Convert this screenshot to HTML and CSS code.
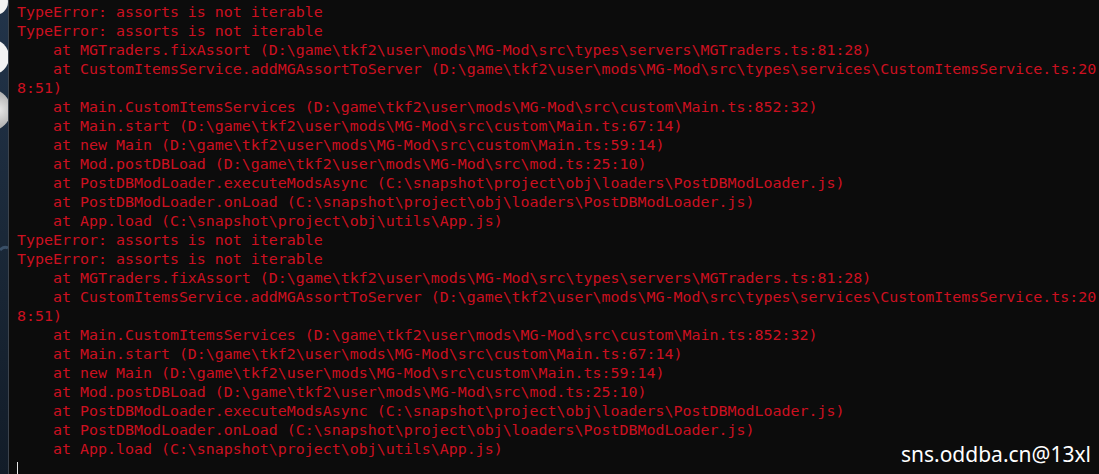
FILE: index.html
```html
<!DOCTYPE html>
<html>
<head>
<meta charset="utf-8">
<link rel="stylesheet" href="styles.css">
</head>
<body>
<div class="screen">
  <div class="wallpaper">
    <svg width="8" height="474" viewBox="0 0 8 474">
      <defs>
        <linearGradient id="bg" x1="0" y1="0" x2="0" y2="1">
          <stop offset="0" stop-color="#22344a"/>
          <stop offset="0.5" stop-color="#1a2838"/>
          <stop offset="1" stop-color="#121c28"/>
        </linearGradient>
        <radialGradient id="grey" cx="0.7" cy="0.5" r="0.6">
          <stop offset="0" stop-color="#e8e8e8"/>
          <stop offset="1" stop-color="#9a9a9a"/>
        </radialGradient>
      </defs>
      <rect width="8" height="474" fill="url(#bg)"/>
      <path d="M0 250 Q4 246 8 248" stroke="#3a5068" stroke-width="3" fill="none"/>
      <circle cx="-5" cy="2" r="13" fill="#f2f2f2"/>
      <circle cx="-9" cy="57" r="18" fill="#f2f2f2"/>
      <circle cx="-10" cy="110" r="21" fill="url(#grey)"/>
    </svg>
  </div>
  <div class="divider"></div>
  <div class="terminal">
<pre class="output">TypeError: assorts is not iterable
TypeError: assorts is not iterable
    at MGTraders.fixAssort (D:\game\tkf2\user\mods\MG-Mod\src\types\servers\MGTraders.ts:81:28)
    at CustomItemsService.addMGAssortToServer (D:\game\tkf2\user\mods\MG-Mod\src\types\services\CustomItemsService.ts:20
8:51)
    at Main.CustomItemsServices (D:\game\tkf2\user\mods\MG-Mod\src\custom\Main.ts:852:32)
    at Main.start (D:\game\tkf2\user\mods\MG-Mod\src\custom\Main.ts:67:14)
    at new Main (D:\game\tkf2\user\mods\MG-Mod\src\custom\Main.ts:59:14)
    at Mod.postDBLoad (D:\game\tkf2\user\mods\MG-Mod\src\mod.ts:25:10)
    at PostDBModLoader.executeModsAsync (C:\snapshot\project\obj\loaders\PostDBModLoader.js)
    at PostDBModLoader.onLoad (C:\snapshot\project\obj\loaders\PostDBModLoader.js)
    at App.load (C:\snapshot\project\obj\utils\App.js)
TypeError: assorts is not iterable
TypeError: assorts is not iterable
    at MGTraders.fixAssort (D:\game\tkf2\user\mods\MG-Mod\src\types\servers\MGTraders.ts:81:28)
    at CustomItemsService.addMGAssortToServer (D:\game\tkf2\user\mods\MG-Mod\src\types\services\CustomItemsService.ts:20
8:51)
    at Main.CustomItemsServices (D:\game\tkf2\user\mods\MG-Mod\src\custom\Main.ts:852:32)
    at Main.start (D:\game\tkf2\user\mods\MG-Mod\src\custom\Main.ts:67:14)
    at new Main (D:\game\tkf2\user\mods\MG-Mod\src\custom\Main.ts:59:14)
    at Mod.postDBLoad (D:\game\tkf2\user\mods\MG-Mod\src\mod.ts:25:10)
    at PostDBModLoader.executeModsAsync (C:\snapshot\project\obj\loaders\PostDBModLoader.js)
    at PostDBModLoader.onLoad (C:\snapshot\project\obj\loaders\PostDBModLoader.js)
    at App.load (C:\snapshot\project\obj\utils\App.js)</pre>
    <div class="prompt"><span class="cursor"></span></div>
  </div>
  <div class="watermark">sns.oddba.cn@13xl</div>
</div>
</body>
</html>
```
FILE: styles.css
```css
html, body {
  margin: 0;
  padding: 0;
  background: #0c0c0c;
  overflow: hidden;
}
.screen {
  position: relative;
  display: flex;
  width: 1099px;
  height: 474px;
  overflow: hidden;
}
.wallpaper {
  width: 8px;
  flex: none;
  display: flex;
}
.divider {
  width: 1px;
  flex: none;
  background: #3c434c;
}
.terminal {
  flex: 1;
  padding: 3px 0 0 8px;
  background: #0c0c0c;
}
.output {
  margin: 0;
  font-family: "DejaVu Sans Mono", "Liberation Mono", monospace;
  font-size: 14.95px;
  line-height: 19px;
  color: #cc1020;
  white-space: pre;
}
.prompt {
  height: 19px;
  display: flex;
  align-items: flex-end;
}
.cursor {
  display: block;
  width: 1px;
  height: 16px;
  background: #e6e6e6;
}
.watermark {
  position: absolute;
  right: 8px;
  bottom: 8px;
  font-family: "Noto Sans", "Open Sans", sans-serif;
  font-size: 21px;
  color: #ffffff;
  line-height: 24px;
}
```
